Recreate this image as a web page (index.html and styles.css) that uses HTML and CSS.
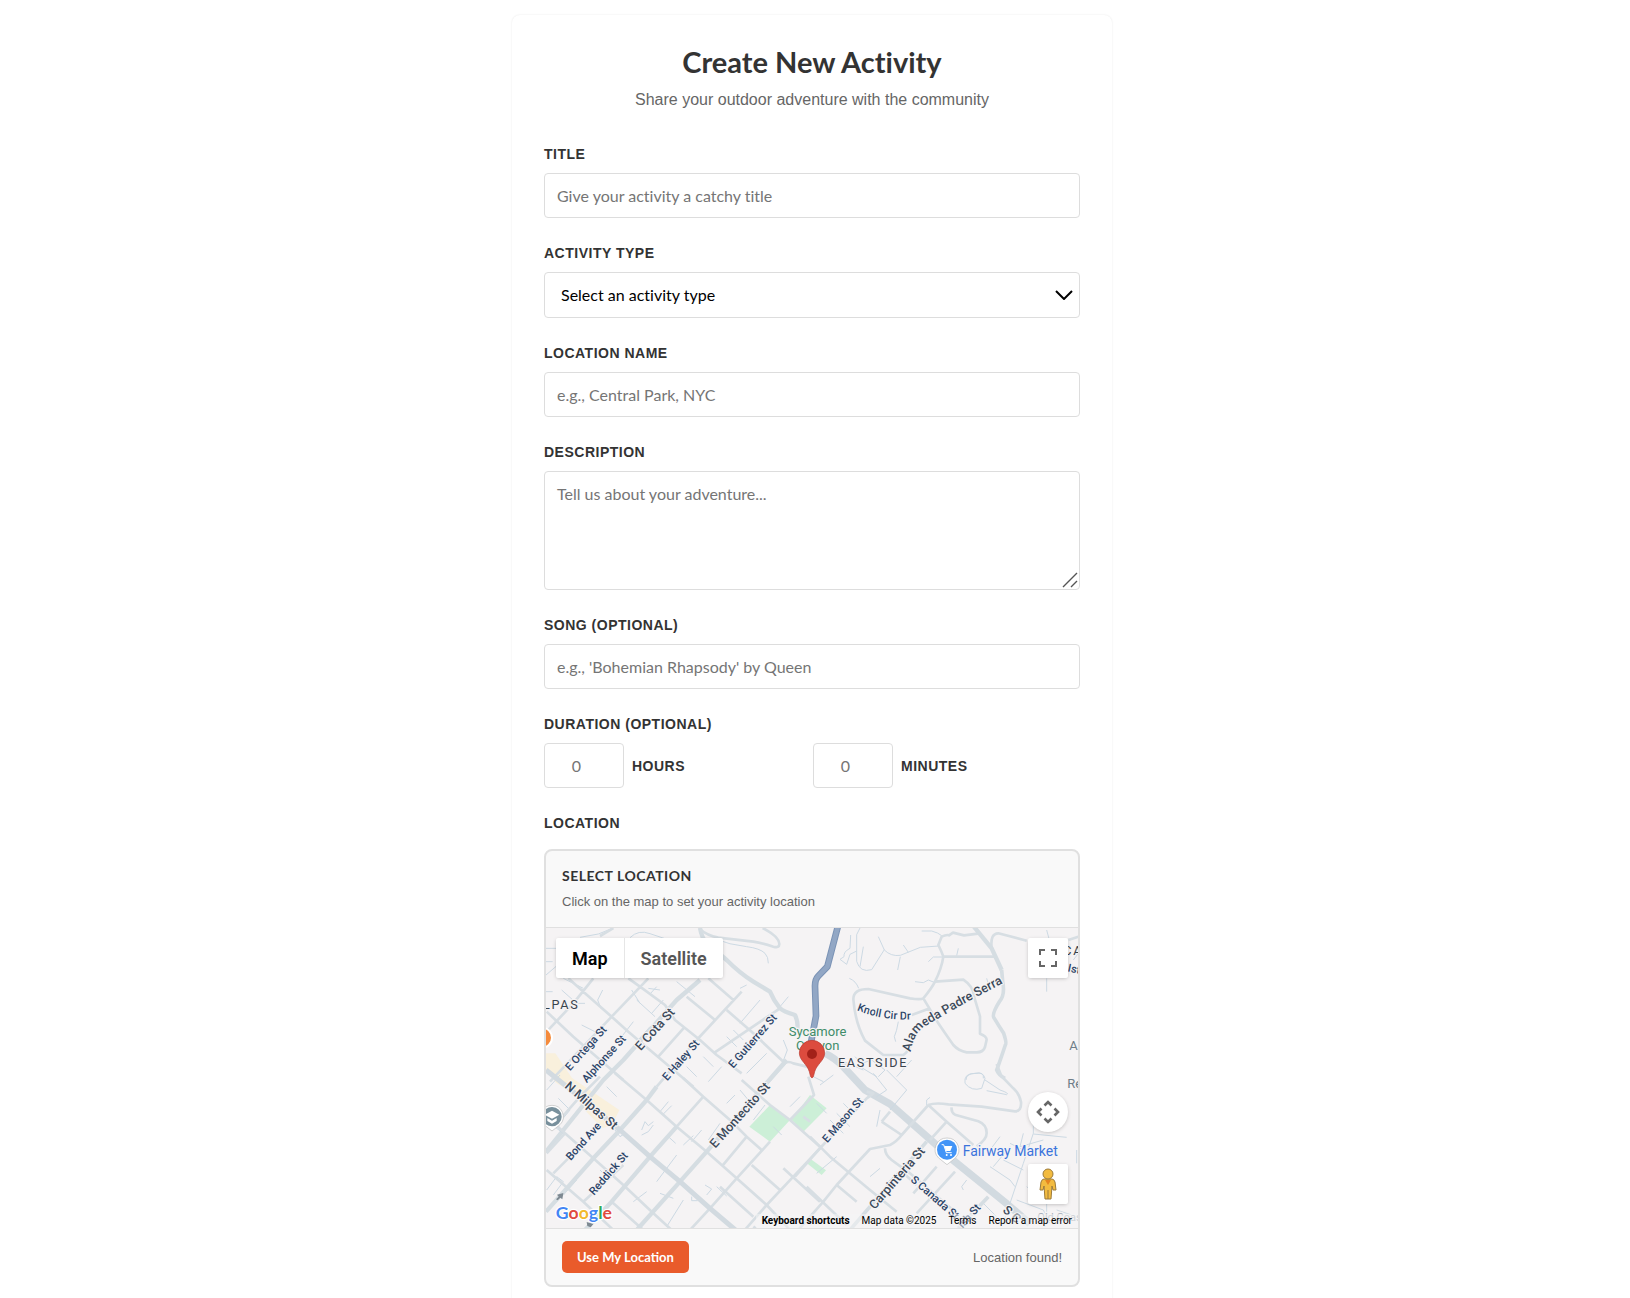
FILE: index.html
```html
<!DOCTYPE html>
<html lang="en">
<head>
<meta charset="utf-8">
<meta name="viewport" content="width=device-width, initial-scale=1">
<title>Create New Activity</title>
<link rel="stylesheet" href="styles.css">
</head>
<body>
<main class="page">
  <form class="card">
    <header class="intro">
      <h1>Create New Activity</h1>
      <p>Share your outdoor adventure with the community</p>
    </header>

    <div class="field">
      <label class="label" for="title">Title</label>
      <input class="control" id="title" type="text" placeholder="Give your activity a catchy title">
    </div>
    <div class="field">
      <label class="label" for="type">Activity Type</label>
      <div class="overlay-host">
        <select class="control select" id="type"><option>Select an activity type</option></select>
        <svg class="chevron" viewBox="0 0 18 10" aria-hidden="true"><path d="M1 1l8 8 8-8" fill="none" stroke="#000" stroke-width="2"/></svg>
      </div>
    </div>
    <div class="field">
      <label class="label" for="place">Location Name</label>
      <input class="control" id="place" type="text" placeholder="e.g., Central Park, NYC">
    </div>
    <div class="field">
      <label class="label" for="description">Description</label>
      <div class="overlay-host">
        <textarea class="control textarea" id="description" placeholder="Tell us about your adventure..."></textarea>
        <svg class="grip" viewBox="0 0 16 16" aria-hidden="true"><path d="M1 15L15 1M9 15l6-6" fill="none" stroke="#555" stroke-width="1.4"/></svg>
      </div>
    </div>
    <div class="field">
      <label class="label" for="song">Song (optional)</label>
      <input class="control" id="song" type="text" placeholder="e.g., 'Bohemian Rhapsody' by Queen">
    </div>
    <div class="field" role="group" aria-labelledby="duration">
      <span class="label" id="duration">Duration (optional)</span>
      <div class="duration">
        <div class="amount"><input class="control number" id="hours" type="number" min="0" placeholder="0"><label class="label" for="hours">Hours</label></div>
        <div class="amount"><input class="control number" id="minutes" type="number" min="0" placeholder="0"><label class="label" for="minutes">Minutes</label></div>
      </div>
    </div>
    <div class="field" role="group" aria-labelledby="location">
      <span class="label" id="location">Location</span>
      <section class="picker">
        <header class="picker-head">
          <h2>Select Location</h2>
          <p>Click on the map to set your activity location</p>
        </header>
        <div class="map">
          <svg class="map-canvas" viewBox="0 0 1596 900" preserveAspectRatio="xMidYMid slice" role="img" aria-label="Map of Eastside">
            <defs>
              <path id="alameda" d="M302 396Q312 335 350 316Q460 250 582 188"/>
              <path id="knoll" d="M140 271Q220 302 304 298"/>
            </defs>
            <!-- shopping blocks and parks -->
            <g class="blocks"><path d="M0 376l28 0 50 74 30 20 112 76-24 48-26 6-70-70 12-16-82-50-30-38z"/></g>
            <g class="parks">
              <path d="M672 531l60 45-60 65-62-45zM792 501l50 40-70 70-35-35z"/>
              <path d="M794 693l46 34-13 14-48-38z"/>
            </g>
            <!-- north west -->
            <g transform="translate(-18 -24)">
              <path class="lane" d="M120 52l55-10 45-18M18 85h30M18 165l70-60M270 53q25-25 60-12l60 20M520 55q50 20 100 25 40 5 55 20 10 10 10 30M70 175l60 30M65 210l45 40h25M188 210l-15 30 10 25M350 200l-20 22M325 205l35 5M275 210l25 40M410 185l55 45M600 205l20-10M660 240l-60 70M745 230l-25 30M125 315l60 30 20-15M280 305l-35 45M330 320l-40 45M490 410l30 30M560 350l30 30M580 330l30 30M620 460l60-60M730 360l12 30-15 40M440 440l30 30M545 440l-40 45M370 240l-35 40M290 240l55 50M18 215h20M18 125h20"/>
              <path class="street" d="M20 275l80 75 150 130M85 175l45 40 85 75 50 45 195 165M265 175l35 25 75 55 30 45 75 60 50 45 75 55M440 230l85 70M505 175l75 65M560 270l80 70 95 90M605 215L470 360 350 500M720 265L520 400M435 320l-80 90M215 290L30 485M325 175L215 290M160 175l-60 75-80 85"/>
              <path class="street" d="M735 430q10-8 25 0l50 12M180 48l40-24M735 430L500 695"/>
              <path class="road" d="M480 24q5 30 20 45l60 51q40 40 80 65l50 30q10 25 30 50 10 10 45 20 12 25 5 50M480 180l-70 60-160 180-60 60L18 695"/>
              <path class="street" d="M480 28q20 18 55 25l105 12q30 5 60 15 18 5 18-8 0-22-50-48"/>
            </g>
            <!-- north east -->
            <g transform="translate(792 -24)">
              <path class="lane" d="M122 45l-2 40q-20 10-18 25l-12 8 20 15 10-30 20-10M150 24l-10 20v80q10 35 45 25l38-60M160 80l-10 60M205 50l18 40q20 20 48 16l60-24 55-4M280 75l15 22M271 110l-8 40M335 33h30q20 5 30 14M445 85l-5 22M355 125l15-14h30M315 185l25 3 15-8 20 8M118 175q20 8 28 30M265 305q-5 30-12 45l4 15M135 410l20 20 30-10 40 30-20 20M260 470l45-50M710 30l8 30M710 175v40M530 175l4 14M90 420l70 30M468 480q0-20 30-20 25-5 22 15M150 440l50 30M790 120l15-20"/>
              <path class="street" d="M340 235q-8 5-40 0l-125-28q-45 0-45 30 5 70 35 125l55 43h60q15-10 28-40M340 235q25-30 35-50 20-40 25-75-5-15-15-35l10-25q15-7 22-4l12-8 33 8 48-6M400 110h155M375 185l85-6q30 20 32 50l18 60v52q20 8 20 18l-5 22q-5 16-25 16h-30q-25-5-40-22-25-35-45-65l-45-75M305 285l55-20M545 85q-5-45 20-45l85 22M775 60l30-10"/>
              <path class="road thin" d="M575 150l3 35q8 40-10 60-25 40-15 50 12 20 28 45 10 30 5 35-20 60-26 75 5 15 25 25"/>
              <path class="road" d="M490 18l55 67 30 65"/>
              <path class="avenue" d="M45 400q30 15 55 40l65 70 75 42 130 115 60 54 160 130 70 60"/>
              <path class="river-edge" d="M85 14L52 140 25 168q-10 10-10 30l3 90-15 80-3 30"/>
              <path class="river" d="M85 14L52 140 25 168q-10 10-10 30l3 90-15 80-3 30"/>
            </g>
            <!-- south west -->
            <g transform="translate(-18 426)">
              <path class="lane" d="M20 60l40-45M55 85l35 35-25 30M30 160l40 30M200 50l30 30M360 125l25-30M370 132l25-25M305 180l10-25 10 12 15-12M305 195l20-10 15-20M385 200l22 20M430 225l30-28M350 335l60-80M280 395l40-30M360 370l40 15M380 470l50-80M495 345l20 12-15 18M455 380v12h18M530 350l30 28M540 160l-35 50M600 60l25 30M640 150l35-45M560 100l25-25M20 360l30-40 20 15-30 40M110 330l-40 45M170 420l30 30M455 215l30-35M750 110l30-30M210 160l30 40 15-10M700 170l25 25M180 300l20 20"/>
              <path class="street" d="M225 10l95 80 90 80 90 75 90 80 90 80 70 75M430 25l60 55 80 70 50 50 45 40M605 30l85 75 60 45 90 80M690 215L590 325l-80 90-60 65M620 200l-75 90M635 285l85 75M840 235l-80 85-80 85-70 80M730 295l110 100M75 190l85 75 90 80 90 85 55 50M20 300l110 95 90 85M215 395l95 85M130 395l120-110M20 140l55 50-55 60M540 350l100 90M490 80l-80 90M805 20l17 55-72 75M180 20l-60 60-70 80M640 470l40 30M40 310l80-80"/>
              <path class="road" d="M410 170l-80 90-115 135-80 85M350 50l-30 40-80 90-80 85L18 425M740-30L500 245l-80 90-130 145"/>
              <path class="avenue slim" d="M18 0l100 80 122 100 90 80 90 75 90 80 80 68"/>
              <path class="arrow" d="M48 388l8-8-5-6 19-5-3 19-6-5-8 8zM142 468l-2-12 20 6-8 10z"/>
            </g>
            <!-- south east -->
            <g transform="translate(792 426)">
              <path class="lane" d="M10 20l30 15M70 15l-40 30M190 10l40 50-30 20M230 0l60 60-50 60M20 100l30 30M60 150l40 40M80 130l40 40M100 100l30 30M210 120l-10 50M180 320l30-25M230 340l40-40M20 310l60-50M350 105v-15l10-8M465 40q-5-30 30-30 25-5 30 15l-10 30q-30 10-50-15M525 30l45 30q30 10 20 14l-60-12M570 200l-30 40M600 230l-50 60M540 290l60 40 15 20M470 330l-15 20 5 10M520 400l40 40M600 220l40 20M670 140v50l-30 90-40 120M670 192l100 10M580 270l60 30M700 430l5 40M620 390l80 30 20 40M650 350l30 25M800 240v40M640 190l-10 40 70-20M710 400v60M600 400l-20 60M740 420l60 20"/>
              <path class="street" d="M170 65l20 5-20 15L25 240l-70 80M355 105l-80 90q-15 20-35 30l-60 12L80 345l-40 50-80 90M215 155l60 40M240 125l-25 30M355 105l55 50 80 70M0 200l60 60 120 100 80 65M-10 350l120 115M225 235q0 20 20 35l55 40 140 120M355 105q20-8 60-2l100 7 100 14q20 0 18-28-5-25-23-41l-36-37-14-36M425 112q-2 15 10 22l70 20q25 10 25 35 0 20-30 40M435 305L320 430M380 290l-70 80M270 300l50 45M80 345l60 50M-20 140l20 15M410 155l-50 55"/>
              <path class="road thin" d="M350 215L180 410l-60 70M535 380l-90 95"/>
            </g>
            <!-- street names -->
            <g class="names">
              <text transform="translate(72 430) rotate(-48)">E Ortega St</text>
              <text transform="translate(122 466) rotate(-48)">Alphonse St</text>
              <text class="big" transform="translate(284 370) rotate(-48)">E Cota St</text>
              <text transform="translate(364 460) rotate(-49)">E Haley St</text>
              <text transform="translate(562 422) rotate(-49)">E Gutierrez St</text>
              <text class="big" transform="translate(54 478) rotate(41)">N Milpas St</text>
              <text transform="translate(74 699) rotate(-48)">Bond Ave</text>
              <text transform="translate(144 803) rotate(-49)">Reddick St</text>
              <text class="big" transform="translate(508 662) rotate(-48)">E Montecito St</text>
              <text transform="translate(844 646) rotate(-49)">E Mason St</text>
              <text class="big" transform="translate(986 846) rotate(-49)">Carpinteria St</text>
              <text transform="translate(1092 758) rotate(41)">S Canada St</text>
              <text transform="translate(1250 902) rotate(-48)">ish St</text>
              <text class="big" transform="translate(1368 850) rotate(41)">S C</text>
              <g transform="translate(792 -24)">
                <text class="big"><textPath href="#alameda">Alameda Padre Serra</textPath></text>
                <text><textPath href="#knoll">Knoll Cir Dr</textPath></text>
              </g>
              <text transform="translate(1564 130) rotate(12)">Ist</text>
            </g>
            <g class="districts">
              <text x="-9" y="244">LPAS</text>
              <text x="876" y="417">EASTSIDE</text>
              <text x="1552" y="80">CA</text>
            </g>
            <g class="poi">
              <text class="green" x="728" y="324">Sycamore</text>
              <text class="green" x="750" y="366">Canyon</text>
              <text class="grey" x="1570" y="366">A</text>
              <text class="grey" x="1564" y="480">Re</text>
              <text class="blue" x="1250" y="685">Fairway Market</text>
              <text class="faint" x="1474" y="880">Old Coast</text>
            </g>
            <!-- place badges -->
            <circle cx="-12" cy="329" r="30" fill="#f58b3c" stroke="#fff" stroke-width="6"/>
            <g>
              <path d="M18 532a34 34 0 0 1 24 58L18 609-6 590a34 34 0 0 1 24-58z" fill="#fff" stroke="#bbb" stroke-width="2"/>
              <circle cx="18" cy="566" r="29" fill="#78909c"/>
              <path d="M18 548l22 12-22 12-22-12zM4 570l14 8 14-8v9l-14 8-14-8z" fill="#fff"/>
            </g>
            <g>
              <path d="M1203 630a35 35 0 0 1 25 60l-25 20-25-20a35 35 0 0 1 25-60z" fill="#fff" stroke="#bbb" stroke-width="2"/>
              <circle cx="1203" cy="665" r="30" fill="#4294f7"/>
              <path d="M1187 650h6l8 24h16" fill="none" stroke="#fff" stroke-width="3"/>
              <path d="M1195 654h24l-6 15h-13z" fill="#fff"/>
              <circle cx="1202" cy="681" r="3" fill="#fff"/><circle cx="1215" cy="681" r="3" fill="#fff"/>
            </g>
            <!-- selected position -->
            <path d="M798 449c-5 0-5-8-8-18-6-22-30-34-30-56a38 38 0 0 1 76 0c0 22-24 34-30 56-3 10-3 18-8 18z" fill="#dc4b3e" stroke="#b93a2f" stroke-width="2"/>
            <circle cx="798" cy="378" r="15" fill="#a32119"/>
            <text class="logo" x="29" y="874"><tspan fill="#4285f4">G</tspan><tspan fill="#e04a3f">o</tspan><tspan fill="#f2b92c">o</tspan><tspan fill="#4285f4">g</tspan><tspan fill="#34a853">l</tspan><tspan fill="#e04a3f">e</tspan></text>
          </svg>
          <div class="map-types"><button type="button" class="active">Map</button><button type="button">Satellite</button></div>
          <button type="button" class="map-button fullscreen" aria-label="Toggle fullscreen view"><svg viewBox="0 0 18 18"><path d="M1 6V1h5M12 1h5v5M17 12v5h-5M6 17H1v-5" fill="none" stroke="#666" stroke-width="2"/></svg></button>
          <button type="button" class="map-button camera" aria-label="Map camera controls"><svg viewBox="0 0 24 24"><path d="M8.500 5.500l3.500-3.500 3.500 3.500M8.500 18.500l3.500 3.500 3.500-3.500M5.500 8.500l-3.500 3.500 3.500 3.500M18.500 8.500l3.500 3.500-3.500 3.500" fill="none" stroke="#666" stroke-width="2.600"/></svg></button>
          <button type="button" class="map-button pegman" aria-label="Street View"><svg viewBox="0 0 18 32"><path d="M5 11h8q2 0 3 3l1 8h-3l-1-4-1 13H6L5 18l-1 4H1l1-8q1-3 3-3z" fill="#f3bb3f" stroke="#9b7a3a"/><path d="M6 12h6l-3 5z" fill="#e58420"/><circle cx="9" cy="6" r="5" fill="#f3bb3f" stroke="#9b7a3a"/><path d="M9 22v9" stroke="#9b7a3a"/></svg></button>
          <div class="credits">
            <button type="button">Keyboard shortcuts</button><span>Map data ©2025</span><a href="#terms">Terms</a><a href="#report">Report a map error</a>
          </div>
        </div>
        <footer class="picker-foot">
          <button type="button" class="primary">Use My Location</button>
          <output>Location found!</output>
        </footer>
      </section>
    </div>
  </form>
</main>
</body>
</html>
```
FILE: styles.css
```css
* { box-sizing: border-box; }

body {
  margin: 0;
  background: #fff;
  color: #333;
  font-family: "Liberation Sans", Arial, sans-serif;
  font-variant-ligatures: none;
}

h1, h2, p { margin: 0; }

button { border: 0; padding: 0; cursor: pointer; }

.page {
  height: 100vh;
  overflow-y: auto;
  padding: 15px 14px 15px 8px;
}

.card {
  max-width: 600px;
  margin: 0 auto;
  padding: 32px;
  border-radius: 8px;
  background: #fff;
  box-shadow: 0 0 2px rgba(0, 0, 0, 0.1);
}

.intro { margin-bottom: 30px; text-align: center; }

.intro h1 {
  margin-bottom: 10px;
  font: 700 29px/30px Lato, sans-serif;
  font-variant-ligatures: none;
}

.intro p { color: #666; font-size: 16px; line-height: 26px; }

.field { margin-bottom: 24px; }

.label {
  display: block;
  margin-bottom: 8px;
  font-size: 14px;
  font-weight: 700;
  line-height: 22px;
  letter-spacing: 0.5px;
  text-transform: uppercase;
}

.control {
  display: block;
  width: 100%;
  height: 45px;
  padding: 12px;
  border: 1px solid #ddd;
  border-radius: 4px;
  background: #fff;
  color: #000;
  font: 400 16px/20px Lato, sans-serif;
  font-variant-ligatures: none;
}

.control::placeholder { color: #757575; }

.overlay-host { position: relative; }

.select { height: 46px; padding: 12px 16px; appearance: none; }

.chevron {
  position: absolute;
  top: 18px;
  right: 7px;
  width: 18px;
  height: 10px;
  pointer-events: none;
}

.textarea { height: 119px; resize: none; }

.grip {
  position: absolute;
  right: 2px;
  bottom: 2px;
  width: 16px;
  height: 16px;
  pointer-events: none;
}

.duration { display: grid; grid-template-columns: 1fr 1fr; gap: 2px; }

.amount { display: flex; align-items: center; gap: 8px; }

.amount .label { margin: 0; }

.number { width: 80px; text-align: center; }

.picker {
  margin-top: 15px;
  overflow: hidden;
  border: 2px solid #e0e0e0;
  border-radius: 8px;
  background: #f9f9f9;
}

.picker-head { padding: 16px 16px 17px; border-bottom: 1px solid #e0e0e0; }

.picker-head h2 {
  margin-bottom: 8px;
  font: 700 14px/18px Lato, sans-serif;
  letter-spacing: 0.5px;
  text-transform: uppercase;
}

.picker-head p { color: #666; font-size: 13px; line-height: 17px; }

.map {
  position: relative;
  height: 300px;
  overflow: hidden;
  background: #f5f3f4;
  font-family: Roboto, sans-serif;
}

.map-canvas { display: block; width: 100%; height: 100%; }

.map-canvas path { stroke-linejoin: round; }
.lane, .street, .road, .avenue, .river, .river-edge { fill: none; }
.lane { stroke: #ccd9e3; stroke-width: 3; }
.street { stroke: #d7dee3; stroke-width: 8; }
.road { stroke: #d5dde2; stroke-width: 13; }
.road.thin { stroke-width: 11; }
.avenue { stroke: #d2dae0; stroke-width: 22; }
.avenue.slim { stroke-width: 15; }
.river-edge { stroke: #7b93b5; stroke-width: 20; }
.river { stroke: #92a7c5; stroke-width: 14; }
.arrow { fill: #7d8891; }
.blocks { fill: #f9f0dc; }
.parks { fill: #ccefd7; }

.map-canvas text {
  stroke: #f5f3f4;
  stroke-width: 7px;
  stroke-linejoin: round;
  paint-order: stroke;
}

.names { fill: #2b4468; font-size: 33px; font-weight: 500; }
.names .big { fill: #3c4a5a; font-size: 38px; }
.districts { fill: #39434d; font-size: 38px; font-weight: 400; letter-spacing: 5px; }
.poi { font-size: 39px; }
.green { fill: #3f8c6a; }
.grey { fill: #6f7d88; }
.blue { fill: #3b74dc; font-size: 42px; }
.faint { fill: #a5aeb9; font-size: 33px; }
.map-canvas .logo { font: 700 53px Lato, sans-serif; stroke: #fff; }

.map-types {
  position: absolute;
  top: 10px;
  left: 10px;
  display: flex;
  border-radius: 2px;
  background: #fff;
  box-shadow: 0 1px 4px -1px rgba(0, 0, 0, 0.3);
}

.map-types button {
  height: 40px;
  padding: 0 16px;
  background: none;
  color: #565656;
  font: 600 18px Roboto, sans-serif;
}

.map-types .active { color: #000; border-right: 1px solid #e6e6e6; }

.map-button {
  position: absolute;
  right: 10px;
  display: grid;
  place-items: center;
  width: 40px;
  height: 40px;
  border-radius: 2px;
  background: #fff;
  box-shadow: 0 1px 4px -1px rgba(0, 0, 0, 0.3);
}

.fullscreen { top: 10px; }
.fullscreen svg { width: 18px; }
.camera { bottom: 96px; border-radius: 50%; }
.camera svg { width: 24px; }
.pegman { bottom: 24px; }
.pegman svg { width: 18px; }

.credits {
  position: absolute;
  right: 0;
  bottom: 0;
  display: flex;
  gap: 12px;
  padding: 0 6px;
  background: rgba(245, 245, 245, 0.5);
  color: #000;
  font-size: 10px;
  line-height: 14px;
}

.credits a { color: #000; text-decoration: none; }
.credits button { background: none; color: #000; font: 700 10px/14px Roboto, sans-serif; }

.picker-foot {
  display: flex;
  align-items: center;
  justify-content: space-between;
  padding: 12px 16px;
  border-top: 1px solid #e0e0e0;
}

.primary {
  height: 32px;
  padding: 0 15px;
  border-radius: 5px;
  background: #e95b2b;
  color: #fff;
  font: 700 13px Lato, sans-serif;
}

.picker-foot output { color: #666; font-size: 13px; }
```
